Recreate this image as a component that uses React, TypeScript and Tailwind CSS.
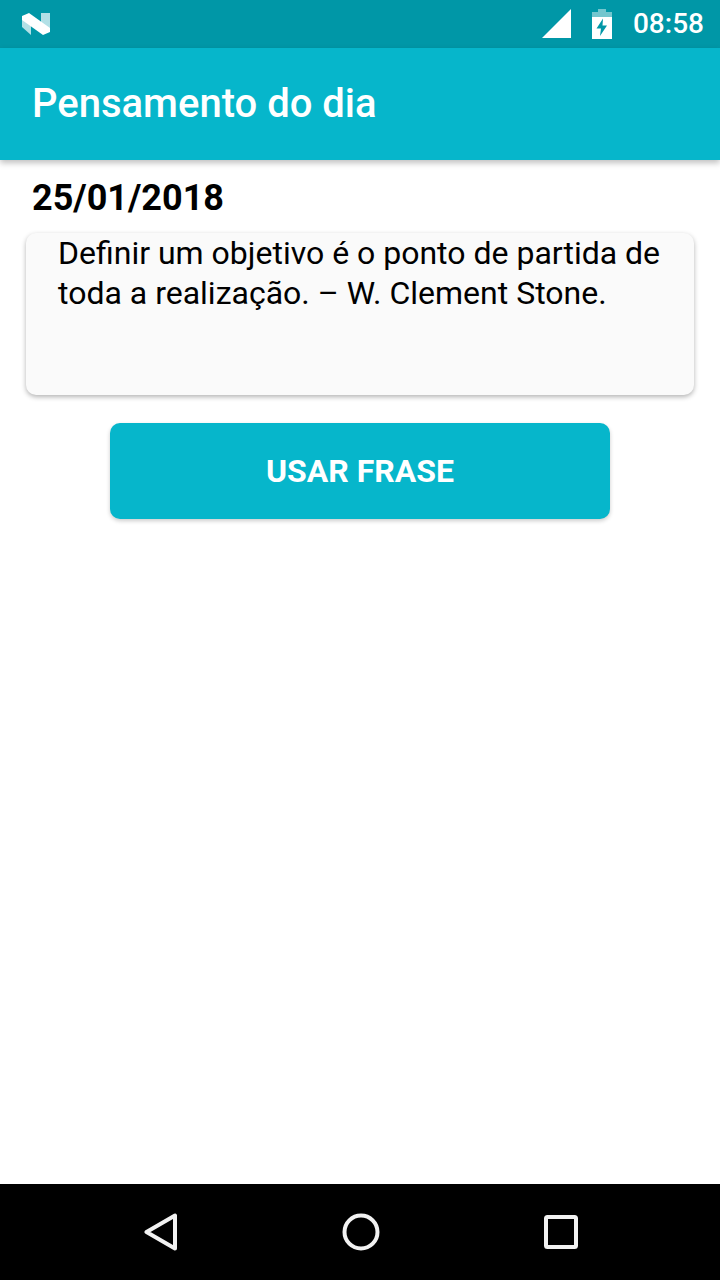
export default function App() {
  return (
    <div className="flex h-[1280px] w-[720px] flex-col overflow-hidden bg-white font-['Roboto',sans-serif]">
      <div className="flex h-12 shrink-0 items-center justify-between bg-[#0097a7] pl-[22px] pr-4">
        <svg width="28" height="22" viewBox="0 0 28 22">
          <path d="M0 3 L9 3 L9 22 L0 14 Z" fill="#b2e0e6" />
          <path d="M19 0 L28 0 L28 19 L19 11 Z" fill="#b2e0e6" />
          <path d="M0 3 L7 0 L28 15 L28 19 L21 22 L0 7 Z" fill="#fff" />
        </svg>
        <div className="flex items-center">
          <svg width="30" height="30" viewBox="0 0 30 30" className="mr-[20px]">
            <path d="M29 9 L29 38 L0 38 Z" transform="translate(0 -9)" fill="#fff" />
          </svg>
          <svg width="20" height="30" viewBox="0 0 20 30" className="mr-[21px]">
            <path d="M6 0 H14 V3 H20 V8 H0 V3 H6 Z" fill="#fff" fillOpacity="0.45" />
            <path d="M0 8 H20 V30 H0 Z M11 9.5 L4.5 19.5 H9 L8 27 L15 16.5 H10.5 Z" fill="#fff" fillRule="evenodd" />
          </svg>
          <span className="text-[28px] font-medium leading-none text-white">08:58</span>
        </div>
      </div>
      <div className="z-10 flex h-28 shrink-0 items-center bg-[#06b6cb] pl-8 shadow-[0_3px_6px_rgba(0,0,0,0.25)]">
        <h1 className="text-[40px] font-medium leading-none text-white">Pensamento do dia</h1>
      </div>
      <div className="flex flex-1 flex-col">
        <p className="mt-[17px] pl-8 text-[36px] font-bold leading-[42px] text-black">25/01/2018</p>
        <div className="mx-[26px] mt-[14px] h-[162px] rounded-[10px] bg-[#fafafa] pl-8 pr-6 shadow-[0_2px_5px_rgba(0,0,0,0.3)]">
          <p className="text-[32px] leading-10 text-black">
            Definir um objetivo é o ponto de partida de toda a realização. – W. Clement Stone.
          </p>
        </div>
        <button className="mx-auto mt-7 flex h-24 w-[500px] items-center justify-center rounded-[10px] bg-[#06b6cb] text-[32px] font-bold text-white shadow-[0_2px_4px_rgba(0,0,0,0.2)]">
          USAR FRASE
        </button>
      </div>
      <div className="flex h-24 shrink-0 items-center bg-black">
        <div className="flex w-full items-center justify-between pl-[144px] pr-[142px]">
          <svg width="34" height="38" viewBox="0 0 34 38" fill="none">
            <path d="M31 2.5 V35.5 L2.5 19 Z" stroke="#f2f2f2" strokeWidth="4" strokeLinejoin="round" />
          </svg>
          <svg width="38" height="38" viewBox="0 0 38 38" fill="none">
            <circle cx="19" cy="19" r="16.5" stroke="#f2f2f2" strokeWidth="4" />
          </svg>
          <svg width="34" height="34" viewBox="0 0 34 34" fill="none">
            <rect x="2" y="2" width="30" height="30" rx="1.5" stroke="#f2f2f2" strokeWidth="4" />
          </svg>
        </div>
      </div>
    </div>
  );
}
